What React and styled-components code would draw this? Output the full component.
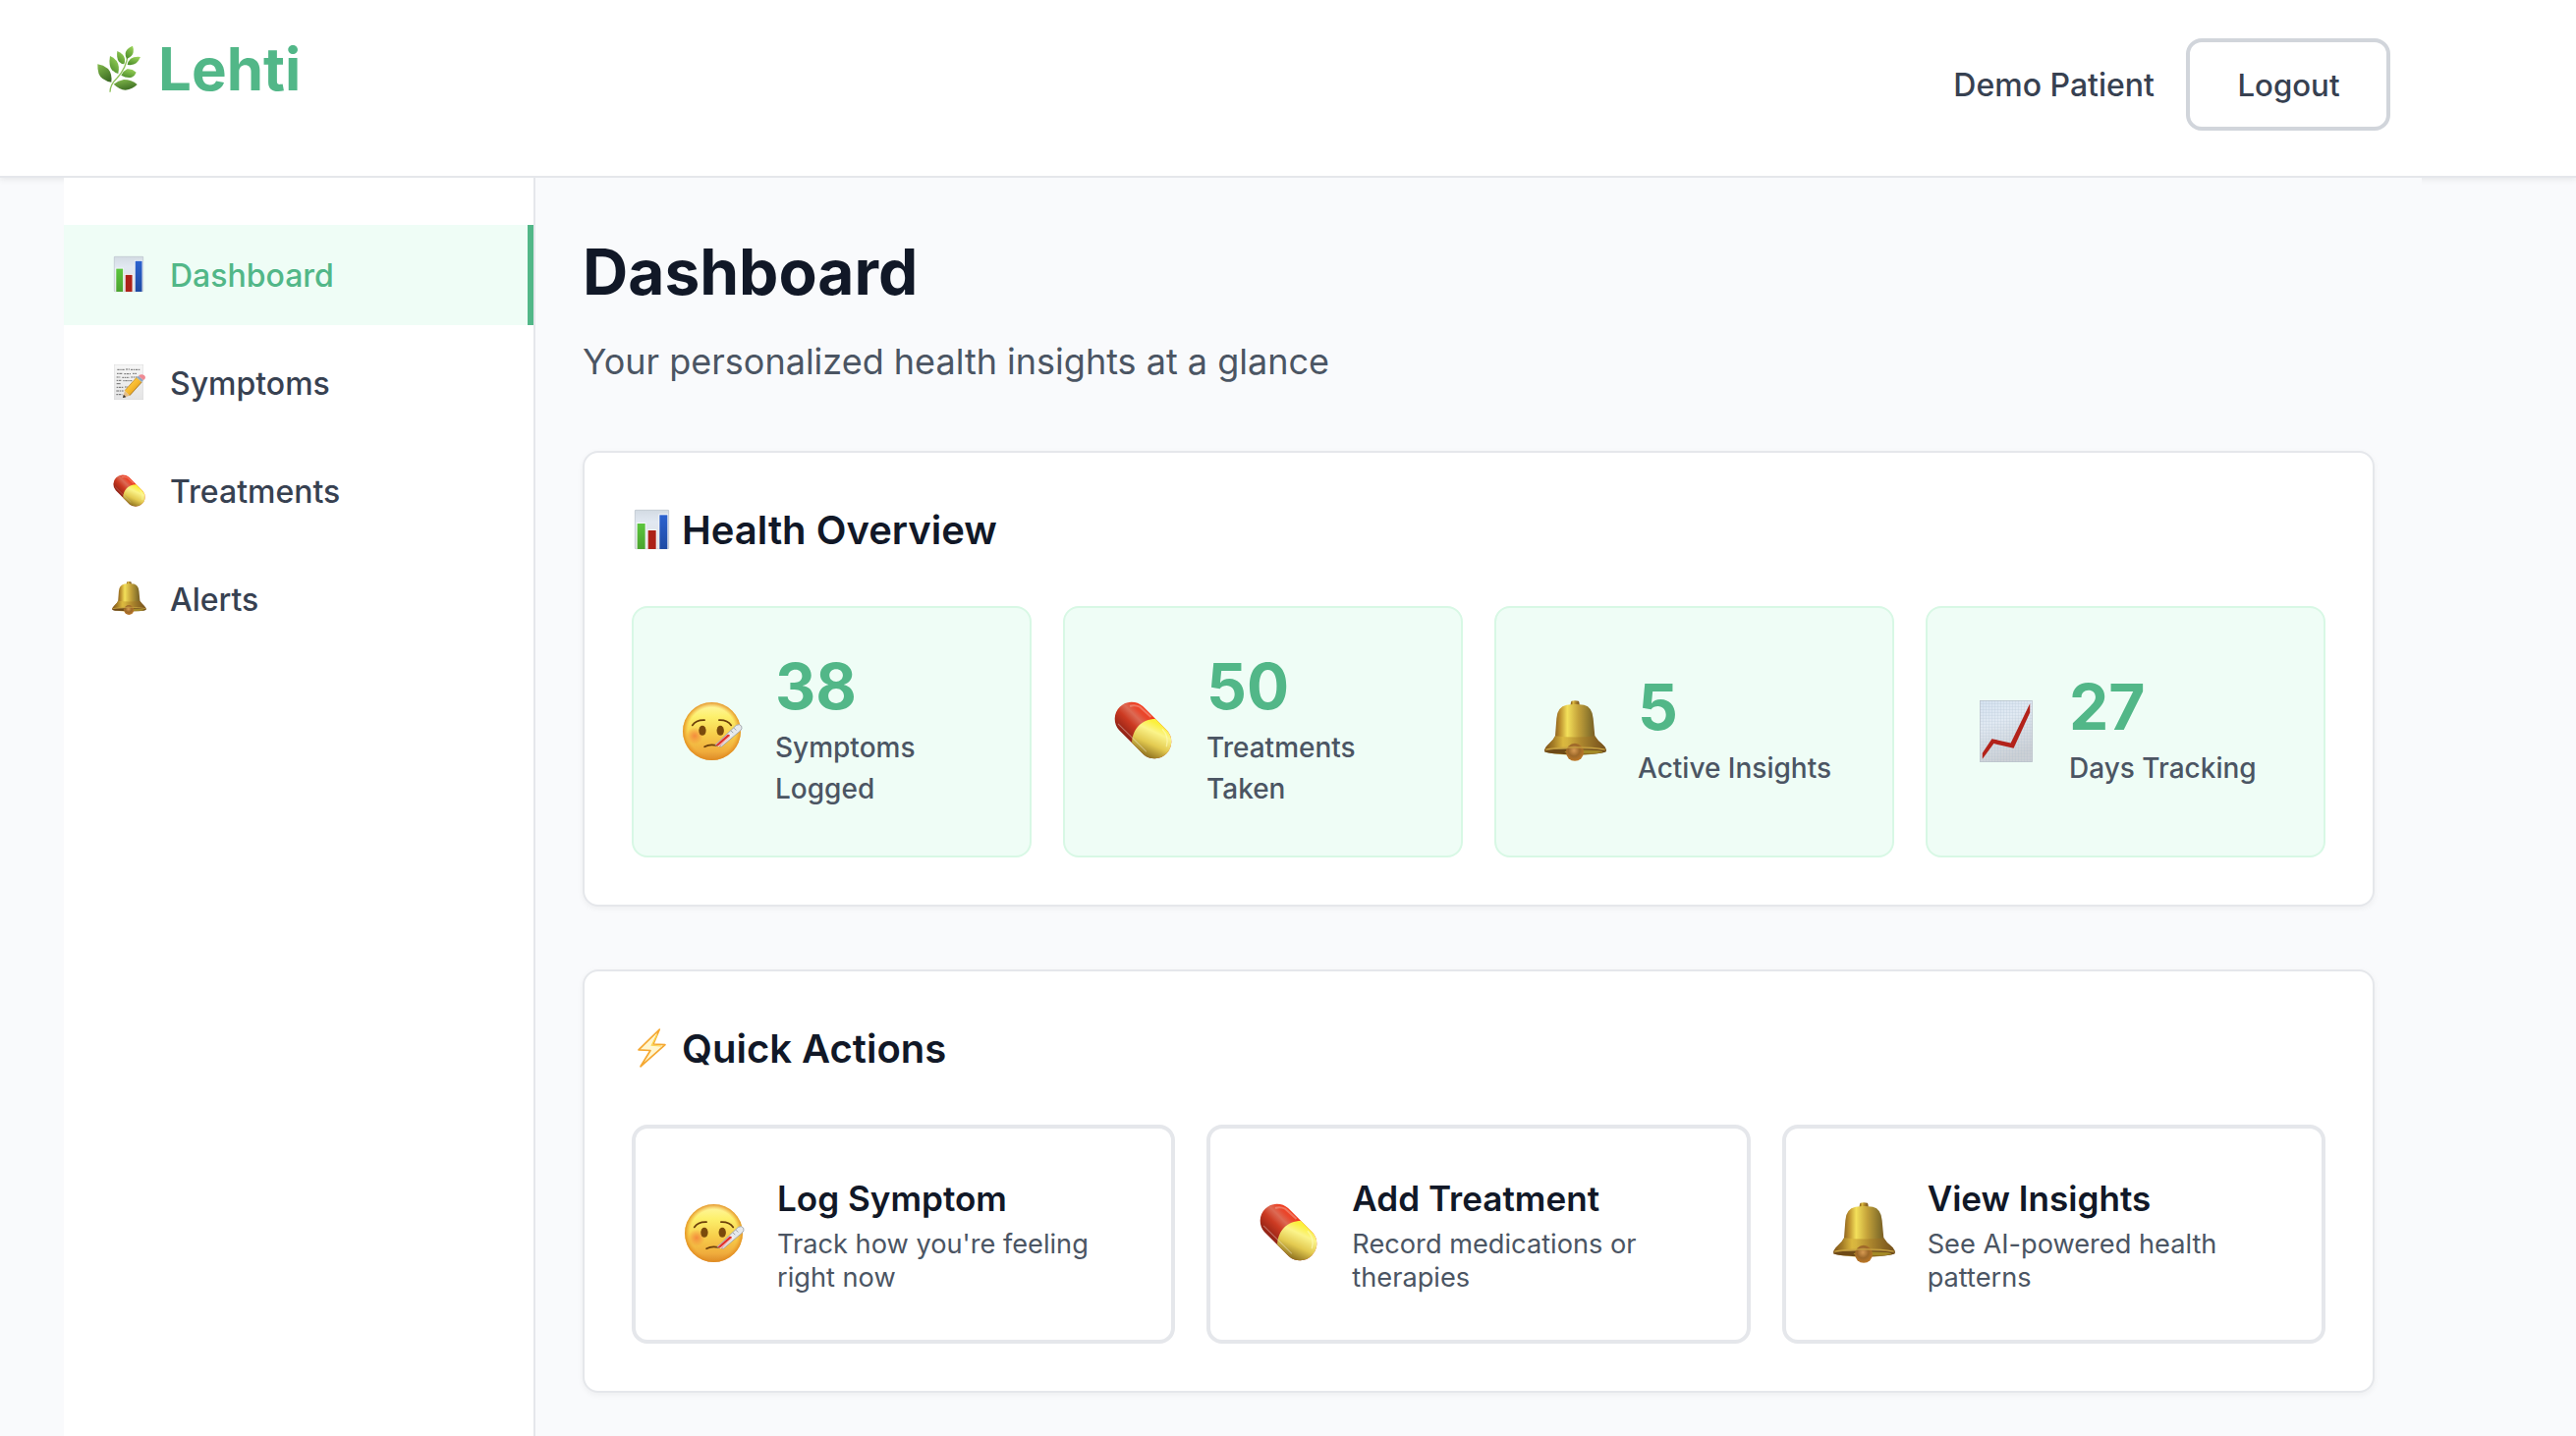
import React, { useId } from "react";
import styled, { createGlobalStyle } from "styled-components";

const color = {
  page: "#f9fafc",
  white: "#ffffff",
  green: "#52b788",
  mint: "#effdf6",
  mintBorder: "#d8f8e5",
  border: "#e5e7eb",
  borderStrong: "#d1d5db",
  ink: "#111827",
  text: "#374151",
  muted: "#4b5563",
};

const GlobalStyle = createGlobalStyle`
  *, *::before, *::after { box-sizing: border-box; }
  html, body, #root { height: 100%; }
  body {
    margin: 0;
    overflow: hidden;
    background: ${color.page};
    color: ${color.ink};
    font-family: Inter, "Liberation Sans", sans-serif;
    font-size: 32px;
    -webkit-font-smoothing: antialiased;
  }
  h1, h2, h3, p { margin: 0; }
  button { font: inherit; color: inherit; text-align: left; cursor: pointer; }
`;

/* ---------- icons ---------- */

const Svg = styled.svg`
  display: block;
  flex: none;
  overflow: visible;
`;

function HerbIcon({ width, height }) {
  const id = useId();
  const leaf = `url(#${id}l)`;
  const dark = `url(#${id}d)`;
  return (
    <Svg width={width} height={height} viewBox="111 78 144 144">
      <defs>
        <linearGradient id={`${id}l`} x1="0.8" y1="0" x2="0.3" y2="1">
          <stop offset="0" stopColor="#9bd45a" />
          <stop offset="1" stopColor="#4f8f2c" />
        </linearGradient>
        <linearGradient id={`${id}d`} x1="0.2" y1="0" x2="0.7" y2="1">
          <stop offset="0" stopColor="#7fb64a" />
          <stop offset="1" stopColor="#3b6b22" />
        </linearGradient>
      </defs>
      <path d="M156 221Q156 199 176 180Q206 150 211 104" fill="none" stroke="#8fc15a" strokeWidth="4" />
      <path d="M118 136Q117 170 133 180Q147 190 160 191Q163 165 150 150Q135 138 118 136Z" fill={dark} />
      <path d="M156 111Q151 141 162 154Q171 163 181 165Q186 141 176 126Q166 114 156 111Z" fill={leaf} />
      <path d="M178 96Q175 118 183 128Q191 136 199 136Q205 118 195 107Q187 99 178 96Z" fill={leaf} />
      <path d="M225 80Q205 88 203 102Q202 112 207 120Q225 112 227 100Q229 90 225 80Z" fill={leaf} />
      <path d="M249 114Q230 112 219 119Q210 127 209 138Q228 140 236 133Q243 127 249 114Z" fill={leaf} />
      <path d="M236 161Q223 149 208 151Q197 156 190 170Q206 179 222 176Q232 172 236 161Z" fill={leaf} />
      <path d="M239 198Q222 183 198 183Q180 186 167 197Q184 213 203 215Q226 212 239 198Z" fill={dark} />
    </Svg>
  );
}

function BarChartIcon({ width, height }) {
  const id = useId();
  return (
    <Svg width={width} height={height} viewBox="0 0 105 120" preserveAspectRatio="none">
      <defs>
        <linearGradient id={`${id}p`} x1="0" y1="0" x2="0" y2="1">
          <stop offset="0" stopColor="#d3dbe3" />
          <stop offset="0.3" stopColor="#e1e8f1" />
          <stop offset="1" stopColor="#dfe0e2" />
        </linearGradient>
        <linearGradient id={`${id}g`} x1="0" y1="0" x2="0" y2="1">
          <stop offset="0" stopColor="#5cc63e" />
          <stop offset="1" stopColor="#4ba32f" />
        </linearGradient>
        <linearGradient id={`${id}b`} x1="0" y1="0" x2="0" y2="1">
          <stop offset="0" stopColor="#2c62cf" />
          <stop offset="1" stopColor="#1f4ba3" />
        </linearGradient>
      </defs>
      <rect width="105" height="120" rx="2" fill={`url(#${id}p)`} />
      <rect x="1" y="1" width="103" height="118" rx="2" fill="none" stroke="#bcc4cc" strokeWidth="2" />
      <rect x="5" y="39" width="30" height="81" fill="#fff" opacity="0.7" />
      <rect x="38" y="60" width="30" height="60" fill="#fff" opacity="0.7" />
      <rect x="73" y="13" width="29" height="107" fill="#fff" opacity="0.7" />
      <rect x="8" y="42" width="24" height="78" fill={`url(#${id}g)`} />
      <rect x="41" y="63" width="24" height="57" fill="#ad2218" />
      <rect x="76" y="16" width="24" height="104" fill={`url(#${id}b)`} />
    </Svg>
  );
}

function MemoIcon({ width, height }) {
  const id = useId();
  return (
    <Svg width={width} height={height} viewBox="0 0 90 108" preserveAspectRatio="none">
      <defs>
        <linearGradient id={`${id}y`} x1="0" y1="0" x2="1" y2="1">
          <stop offset="0" stopColor="#ffdf62" />
          <stop offset="0.5" stopColor="#f7b92e" />
          <stop offset="1" stopColor="#c98112" />
        </linearGradient>
        <linearGradient id={`${id}p`} x1="0" y1="0" x2="0" y2="1">
          <stop offset="0" stopColor="#f6f6f6" />
          <stop offset="1" stopColor="#e4e4e5" />
        </linearGradient>
      </defs>
      <rect x="0.5" y="0.5" width="89" height="107" fill={`url(#${id}p)`} stroke="#d0d0d0" />
      <g stroke="#6c6c6c" strokeWidth="3" fill="none">
        <path d="M10 16h22M36 15h12M51 16h29" strokeDasharray="7 2 4 2" />
        <path d="M9 28h18M31 29h20M57 28h12" strokeDasharray="5 2 8 2" />
        <path d="M8 39h13M25 40h22M52 39h20" strokeDasharray="6 2 3 2" />
        <path d="M8 49h16M28 50h27" strokeDasharray="4 2 7 2" />
        <path d="M8 59h12" />
        <path d="M8 70h21M33 69h9" strokeDasharray="5 2 6 2" />
        <path d="M7 81h22" strokeDasharray="8 2 4 2" />
        <path d="M7 92h18" strokeDasharray="6 2" />
      </g>
      <path d="M27 102L33 80L48 95Z" fill="#e3bd8a" />
      <path d="M27 102L29.500 92L37 99.500Z" fill="#33302f" />
      <path d="M33 80L69 40L85 54L48 95Z" fill={`url(#${id}y)`} />
      <path d="M33 80L69 40" stroke="#b87a14" strokeWidth="2" />
      <path d="M48 95L85 54" stroke="#8d5c0e" strokeWidth="2" />
      <path d="M69 40L75 35L90 48L85 54Z" fill="#8ea9c4" />
      <path d="M75 35Q84 27 93 34Q100 42 90 48Z" fill="#ee8a93" />
    </Svg>
  );
}

function PillIcon({ width, height }) {
  const id = useId();
  return (
    <Svg width={width} height={height} viewBox="0 0 176 176">
      <defs>
        <linearGradient id={`${id}r`} gradientUnits="userSpaceOnUse" x1="90" y1="18" x2="18" y2="90">
          <stop offset="0" stopColor="#f23a1c" />
          <stop offset="0.18" stopColor="#e8482e" />
          <stop offset="0.36" stopColor="#dc6a54" />
          <stop offset="0.6" stopColor="#cc3a22" />
          <stop offset="1" stopColor="#8f2114" />
        </linearGradient>
        <linearGradient id={`${id}y`} gradientUnits="userSpaceOnUse" x1="146" y1="74" x2="100" y2="172">
          <stop offset="0" stopColor="#fbf03c" />
          <stop offset="0.25" stopColor="#fbf48a" />
          <stop offset="0.6" stopColor="#e3ca50" />
          <stop offset="1" stopColor="#8a6c1c" />
        </linearGradient>
      </defs>
      <path d="M87 15A51 51 0 0 0 15 87L89 161A51 51 0 0 0 161 89Z" fill={`url(#${id}r)`} />
      <path d="M54 126C56 84 84 54 126 54L161 89A51 51 0 0 1 89 161Z" fill={`url(#${id}y)`} />
      <path d="M48 15Q62 9 78 17L112 48" fill="none" stroke="#f3b5a6" strokeWidth="6" opacity="0.45" />
      <path d="M12 68L98 153" fill="none" stroke="#fff" strokeWidth="3" opacity="0.35" />
      <path d="M146 84Q168 106 159 138" fill="none" stroke="#fffbc0" strokeWidth="4" opacity="0.6" />
    </Svg>
  );
}

function BellIcon({ width, height }) {
  const id = useId();
  return (
    <Svg width={width} height={height} viewBox="0 0 189 185">
      <defs>
        <linearGradient id={`${id}b`} x1="0" y1="0" x2="1" y2="0">
          <stop offset="0.15" stopColor="#7f5519" />
          <stop offset="0.26" stopColor="#c09430" />
          <stop offset="0.37" stopColor="#f3e05a" />
          <stop offset="0.55" stopColor="#c4a23a" />
          <stop offset="0.75" stopColor="#85702b" />
          <stop offset="0.85" stopColor="#7a5420" />
        </linearGradient>
        <linearGradient id={`${id}f`} x1="0" y1="0" x2="1" y2="0">
          <stop offset="0" stopColor="#7c5116" />
          <stop offset="0.3" stopColor="#dcb93e" />
          <stop offset="0.6" stopColor="#aa822b" />
          <stop offset="1" stopColor="#74511c" />
        </linearGradient>
        <radialGradient id={`${id}c`} cx="0.45" cy="0.4" r="0.65">
          <stop offset="0" stopColor="#d79a52" />
          <stop offset="0.5" stopColor="#9c6829" />
          <stop offset="1" stopColor="#c27a26" />
        </radialGradient>
      </defs>
      <path d="M80 16Q80 4 83 2Q93 -2 104 2Q107 4 107 16Z" fill={`url(#${id}f)`} />
      <path d="M33 108L37 55Q39 20 68 14Q94 9 121 14Q146 20 149 55L154 108Q162 122 177 134Q189 144 189 155Q170 146 94 146Q20 146 0 155Q0 144 14 132Q28 120 33 108Z" fill={`url(#${id}b)`} />
      <path d="M33 108Q94 116 154 108Q162 122 177 134Q189 144 189 156Q160 166 94 167Q30 166 0 157Q0 144 14 132Q28 120 33 108Z" fill={`url(#${id}f)`} opacity="0.85" />
      <ellipse cx="94.500" cy="156" rx="92" ry="9" fill="#6e4a17" />
      <ellipse cx="120" cy="157" rx="58" ry="6" fill="#b29a2c" opacity="0.8" />
      <circle cx="93" cy="158" r="27" fill={`url(#${id}c)`} />
      <path d="M4 150Q40 143 94 143Q150 143 185 150" fill="none" stroke="#c9a341" strokeWidth="4" />
    </Svg>
  );
}

function SickFaceIcon({ width, height }) {
  const id = useId();
  return (
    <Svg width={width} height={height} viewBox="0 0 179 176">
      <defs>
        <linearGradient id={`${id}f`} x1="0" y1="0" x2="0" y2="1">
          <stop offset="0" stopColor="#fff7a8" />
          <stop offset="0.25" stopColor="#fdf06c" />
          <stop offset="0.55" stopColor="#f7cf4b" />
          <stop offset="0.85" stopColor="#f0ac3c" />
          <stop offset="1" stopColor="#d98a2b" />
        </linearGradient>
        <radialGradient id={`${id}s`} cx="0.5" cy="0.5" r="0.5">
          <stop offset="0.82" stopColor="#f0a02c" stopOpacity="0" />
          <stop offset="1" stopColor="#e08a1f" stopOpacity="0.9" />
        </radialGradient>
        <radialGradient id={`${id}c`}>
          <stop offset="0" stopColor="#f4803a" stopOpacity="0.85" />
          <stop offset="1" stopColor="#f4803a" stopOpacity="0" />
        </radialGradient>
      </defs>
      <circle cx="88" cy="88" r="88" fill={`url(#${id}f)`} />
      <circle cx="88" cy="88" r="88" fill={`url(#${id}s)`} />
      <circle cx="36" cy="102" r="26" fill={`url(#${id}c)`} />
      <ellipse cx="59.500" cy="86" rx="11" ry="15" fill="#7a4a0c" />
      <ellipse cx="114" cy="86" rx="11" ry="15" fill="#7a4a0c" />
      <path d="M29 70Q40 53 66 54" fill="none" stroke="#6b3f0a" strokeWidth="5" strokeLinecap="round" />
      <path d="M110 54Q136 53 147 70" fill="none" stroke="#6b3f0a" strokeWidth="5" strokeLinecap="round" />
      <path d="M66 135Q82 126 102 131" fill="none" stroke="#6b3f0a" strokeWidth="5" strokeLinecap="round" />
      <path d="M98 130L162 70Q172 64 178 72Q182 80 174 87L117 135Z" fill="#e6e9ec" stroke="#9aa0a8" strokeWidth="2.500" />
      <path d="M99 131L136 98Q143 96 144 104L113 133Z" fill="#e0322c" />
      <path d="M108 134L148 99" stroke="#fff" strokeWidth="3" opacity="0.8" />
      <path d="M146 86l7 7M155 78l7 7" stroke="#8d939b" strokeWidth="2.500" />
    </Svg>
  );
}

function TrendIcon({ width, height }) {
  const id = useId();
  return (
    <Svg width={width} height={height} viewBox="0 0 162 190">
      <defs>
        <linearGradient id={`${id}p`} x1="0" y1="0" x2="0.3" y2="1">
          <stop offset="0" stopColor="#d6e3f1" />
          <stop offset="0.4" stopColor="#e2eaf3" />
          <stop offset="1" stopColor="#cdd1d6" />
        </linearGradient>
        <pattern id={`${id}g`} width="9" height="9" patternUnits="userSpaceOnUse">
          <path d="M0 0H9M0 0V9" stroke="#9fb3c8" strokeWidth="1.800" opacity="0.6" />
        </pattern>
      </defs>
      <rect width="162" height="190" fill={`url(#${id}p)`} />
      <rect width="162" height="190" fill={`url(#${id}g)`} />
      <rect x="1" y="1" width="160" height="188" fill="none" stroke="#b9c1c9" strokeWidth="2" />
      <path d="M8 162L37 118L95 131L154 10V38L104 147L43 133L8 180Z" fill="#b3221a" />
    </Svg>
  );
}

function BoltIcon({ width, height }) {
  return (
    <Svg width={width} height={height} viewBox="0 0 29 40">
      <path
        d="M22.300 1L1 21.800L13 22.500L3 38.800L28 16.700L16 16Z"
        fill="#fff6cf"
        stroke="#f5a832"
        strokeWidth="1.700"
        strokeLinejoin="round"
      />
      <path d="M20 6L14.300 17.300L24 18" fill="none" stroke="#fbd64e" strokeWidth="1.200" />
    </Svg>
  );
}

/* ---------- header ---------- */

const Header = styled.header`
  height: 181px;
  background: ${color.white};
  border-bottom: 2px solid ${color.border};
  box-shadow: 0 2px 6px rgba(0, 0, 0, 0.08);
`;

const HeaderInner = styled.div`
  display: flex;
  justify-content: space-between;
  align-items: flex-start;
  width: 2400px;
  margin-left: 65px;
  padding: 24px 32px 0;
`;

const Brand = styled.div`
  display: flex;
  align-items: center;
  gap: 16px;
  height: 92px;
  color: ${color.green};
  font-size: 60px;
  font-weight: 700;
  line-height: 92px;
`;

const Account = styled.div`
  display: flex;
  align-items: center;
  gap: 32px;
  margin-top: 15px;
  color: ${color.text};
  font-weight: 500;
`;

const LogoutButton = styled.button`
  height: 94px;
  padding: 2px 47.5px 0 48.5px;
  background: ${color.white};
  border: 4px solid ${color.borderStrong};
  border-radius: 16px;
  font-size: 31.2px;
  line-height: 84px;
`;

/* ---------- shell ---------- */

const Shell = styled.div`
  display: flex;
  width: 2400px;
  height: calc(100% - 181px);
  margin-left: 65px;
  background: ${color.page};
`;

const Sidebar = styled.nav`
  display: flex;
  flex: none;
  flex-direction: column;
  gap: 8px;
  width: 480px;
  padding-top: 48px;
  background: ${color.white};
  border-right: 2px solid ${color.border};
`;

const NavItem = styled.a`
  display: flex;
  align-items: center;
  gap: 24px;
  height: 102px;
  padding: 2px 48px 0;
  background: ${(p) => (p.$active ? color.mint : "transparent")};
  border-right: 6px solid ${(p) => (p.$active ? color.green : "transparent")};
  color: ${(p) => (p.$active ? color.green : color.text)};
  font-weight: 500;
  line-height: 48px;
`;

const NavIcon = styled.span`
  display: flex;
  justify-content: center;
  width: 36px;
  padding-bottom: 4px;
`;

const Main = styled.main`
  flex: 1;
  min-width: 0;
  padding: 48px;
`;

const PageTitle = styled.h1`
  font-size: 64px;
  font-weight: 700;
  line-height: 96px;
`;

const PageSubtitle = styled.p`
  margin: 16px 0 64px;
  color: ${color.muted};
  font-size: 36px;
  line-height: 54px;
`;

const Card = styled.section`
  margin-bottom: 64px;
  padding: 48px;
  background: ${color.white};
  border: 2px solid ${color.border};
  border-radius: 16px;
  box-shadow: 0 2px 6px rgba(0, 0, 0, 0.05);
`;

const CardTitle = styled.h2`
  display: flex;
  align-items: center;
  margin-bottom: 46px;
  font-size: 40px;
  font-weight: 600;
  line-height: 62px;
`;

const TitleIcon = styled.span`
  display: flex;
  width: 51px;
  padding-bottom: 2px;
  padding-left: ${(p) => p.$inset}px;
`;

const Grid = styled.div`
  display: grid;
  grid-template-columns: repeat(${(p) => p.$columns}, 1fr);
  gap: 32px;
`;

const EmojiSlot = styled.span`
  display: flex;
  flex: none;
  align-items: center;
  justify-content: center;
  width: 64px;
  padding-right: ${(p) => p.$trim ?? 0}px;
  padding-bottom: ${(p) => 2 + (p.$trim ?? 0)}px;
`;

const Stat = styled.div`
  display: flex;
  align-items: center;
  gap: 32px;
  height: 256px;
  padding: 0 48px;
  background: ${color.mint};
  border: 2px solid ${color.mintBorder};
  border-radius: 16px;
`;

const StatValue = styled.div`
  margin-bottom: 8px;
  color: ${color.green};
  font-size: 64px;
  font-weight: 700;
  line-height: 66px;
`;

const StatLabel = styled.div`
  color: ${color.muted};
  font-size: 28px;
  font-weight: 500;
  line-height: 42px;
`;

const Action = styled.button`
  display: flex;
  align-items: center;
  gap: 32px;
  height: 222.5px;
  padding: 0 48px;
  background: ${color.white};
  border: 4px solid ${color.border};
  border-radius: 16px;
`;

const ActionBody = styled.div`
  padding-top: 3px;
`;

const ActionTitle = styled.h3`
  margin-bottom: 8px;
  font-size: 35.1px;
  font-weight: 600;
  line-height: 44px;
`;

const ActionText = styled.p`
  color: ${color.muted};
  font-size: 27.2px;
  line-height: 34px;
`;

/* ---------- content ---------- */

const navItems = [
  { label: "Dashboard", icon: <BarChartIcon width={30} height={36} />, active: true },
  { label: "Symptoms", icon: <MemoIcon width={30} height={36} /> },
  { label: "Treatments", icon: <PillIcon width={33} height={33} /> },
  { label: "Alerts", icon: <BellIcon width={35} height={34} /> },
];

const stats = [
  { value: "38", label: "Symptoms Logged", icon: <SickFaceIcon width={60} height={59} /> },
  { value: "50", label: "Treatments Taken", icon: <PillIcon width={59} height={59} />, trim: 2 },
  { value: "5", label: "Active Insights", icon: <BellIcon width={63} height={62} /> },
  { value: "27", label: "Days Tracking", icon: <TrendIcon width={54} height={63} /> },
];

const actions = [
  { title: "Log Symptom", text: "Track how you're feeling right now", icon: <SickFaceIcon width={60} height={59} /> },
  { title: "Add Treatment", text: "Record medications or therapies", icon: <PillIcon width={59} height={59} />, trim: 2 },
  { title: "View Insights", text: "See AI-powered health patterns", icon: <BellIcon width={63} height={62} /> },
];

export default function App() {
  return (
    <>
      <GlobalStyle />
      <Header>
        <HeaderInner>
          <Brand>
            <HerbIcon width={48} height={48} />
            <span>Lehti</span>
          </Brand>
          <Account>
            <span>Demo Patient</span>
            <LogoutButton>Logout</LogoutButton>
          </Account>
        </HeaderInner>
      </Header>
      <Shell>
        <Sidebar>
          {navItems.map((item) => (
            <NavItem key={item.label} $active={item.active}>
              <NavIcon>{item.icon}</NavIcon>
              <span>{item.label}</span>
            </NavItem>
          ))}
        </Sidebar>
        <Main>
          <PageTitle>Dashboard</PageTitle>
          <PageSubtitle>Your personalized health insights at a glance</PageSubtitle>
          <Card>
            <CardTitle>
              <TitleIcon $inset={3}>
                <BarChartIcon width={35} height={40} />
              </TitleIcon>
              Health Overview
            </CardTitle>
            <Grid $columns={4}>
              {stats.map((stat) => (
                <Stat key={stat.label}>
                  <EmojiSlot $trim={stat.trim}>{stat.icon}</EmojiSlot>
                  <div>
                    <StatValue>{stat.value}</StatValue>
                    <StatLabel>{stat.label}</StatLabel>
                  </div>
                </Stat>
              ))}
            </Grid>
          </Card>
          <Card>
            <CardTitle>
              <TitleIcon $inset={6}>
                <BoltIcon width={29} height={40} />
              </TitleIcon>
              Quick Actions
            </CardTitle>
            <Grid $columns={3}>
              {actions.map((action) => (
                <Action key={action.title}>
                  <EmojiSlot $trim={action.trim}>{action.icon}</EmojiSlot>
                  <ActionBody>
                    <ActionTitle>{action.title}</ActionTitle>
                    <ActionText>{action.text}</ActionText>
                  </ActionBody>
                </Action>
              ))}
            </Grid>
          </Card>
        </Main>
      </Shell>
    </>
  );
}
